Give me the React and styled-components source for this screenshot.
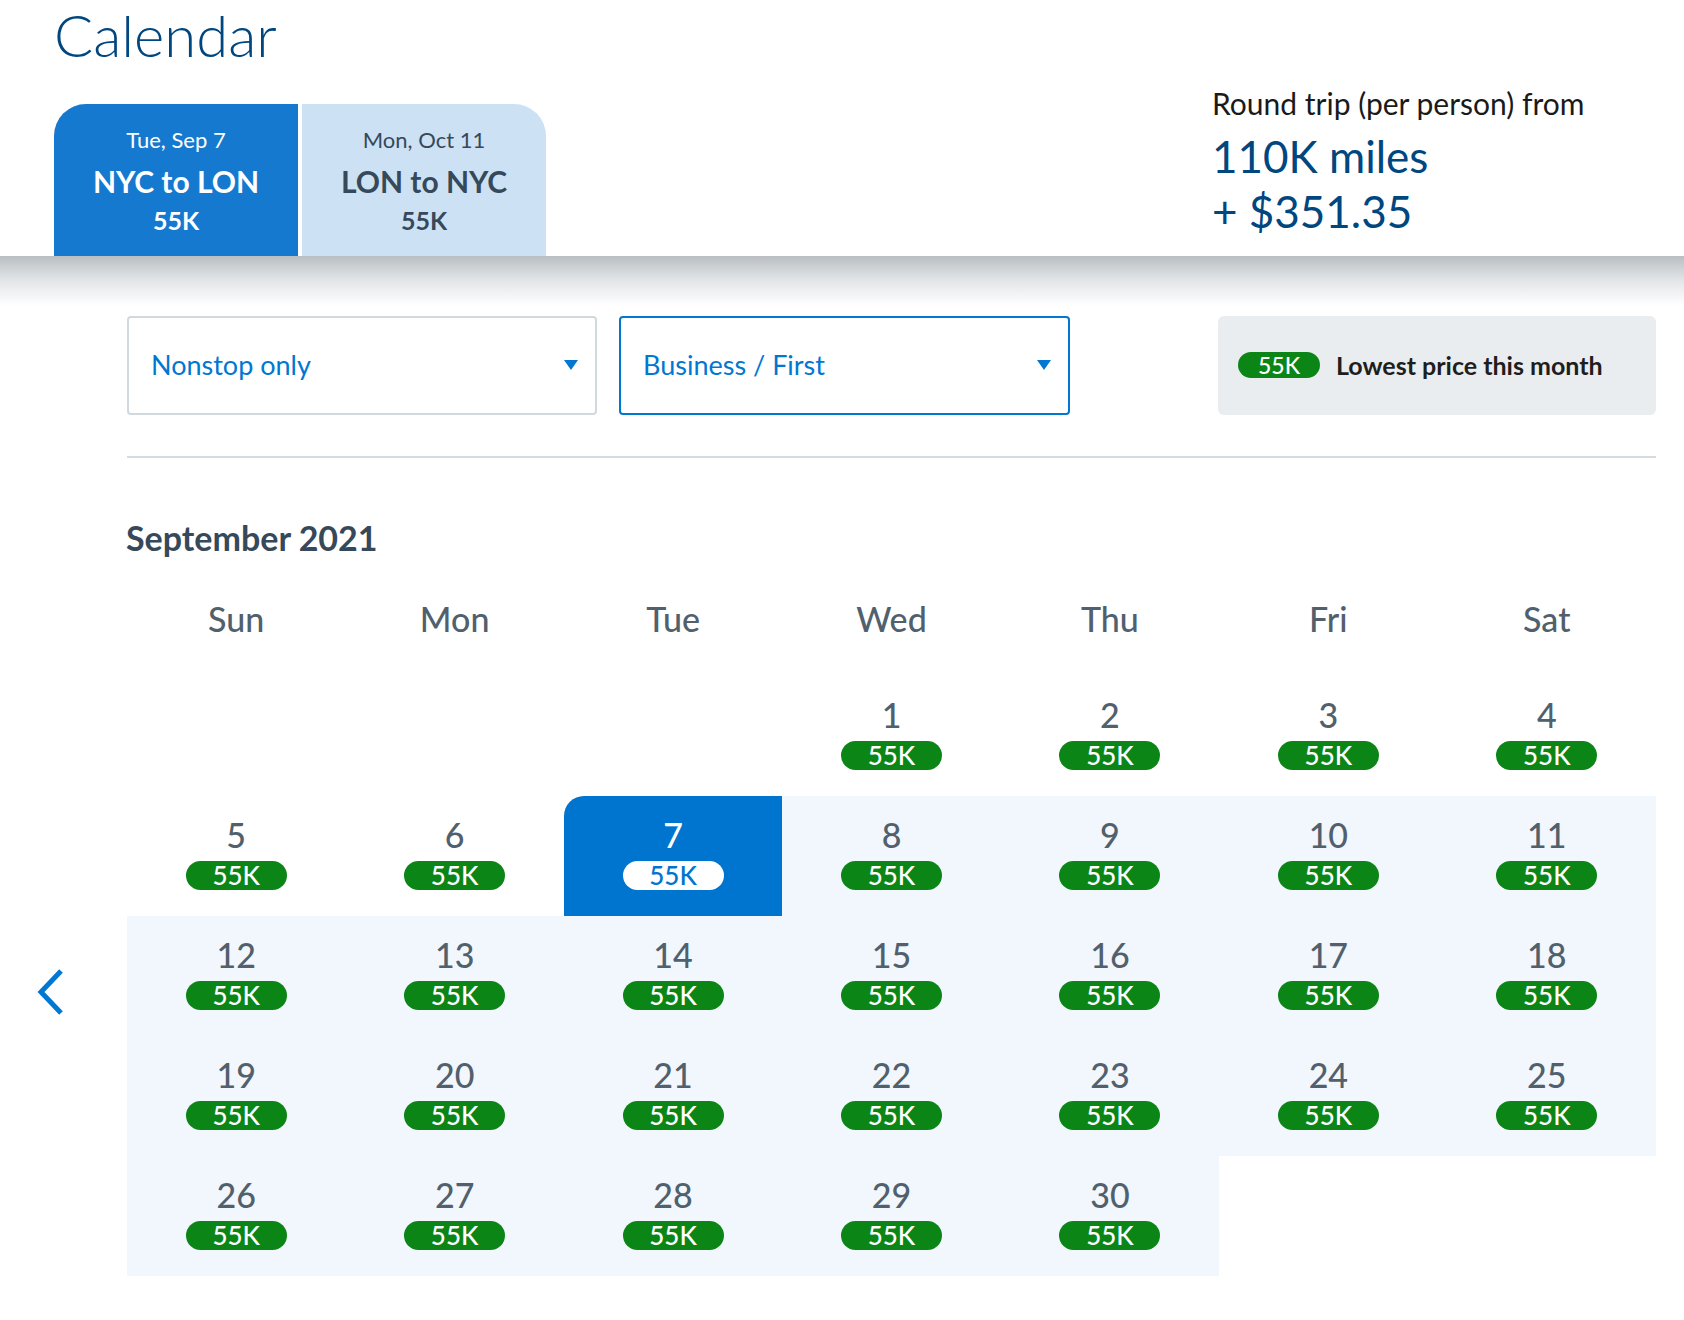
import React from 'react'
import styled, { createGlobalStyle } from 'styled-components'

const GlobalStyle = createGlobalStyle`
  body {
    margin: 0;
    background: #fff;
    font-family: Lato, "Open Sans", "Liberation Sans", sans-serif;
  }
`

const Page = styled.div`
  width: 1684px;
  min-height: 1320px;
  background: #fff;
`

const Header = styled.header`
  display: flex;
  justify-content: space-between;
  height: 256px;
  padding: 0 72px 0 54px;
  box-sizing: border-box;
`

const HeaderLeft = styled.div`
  display: flex;
  flex-direction: column;
`

const Title = styled.h1`
  margin: 6px 0 0 0;
  font-size: 58px;
  line-height: 58px;
  font-weight: 300;
  color: #00467f;
`

const Tabs = styled.div`
  display: flex;
  gap: 4px;
  margin-top: 40px;
`

const Tab = styled.div`
  width: 244px;
  height: 152px;
  box-sizing: border-box;
  padding-top: 23px;
  display: flex;
  flex-direction: column;
  align-items: center;
  background: ${p => (p.$active ? '#1479cf' : '#cde1f4')};
  color: ${p => (p.$active ? '#fff' : '#36495a')};
  border-radius: ${p => (p.$active ? '32px 0 0 0' : '0 32px 0 0')};
`

const TabDate = styled.div`
  font-size: 22px;
  line-height: 26px;
  font-weight: 400;
`

const TabRoute = styled.div`
  margin-top: 10px;
  font-size: 30px;
  line-height: 36px;
  font-weight: 700;
`

const TabMiles = styled.div`
  margin-top: 6px;
  font-size: 25px;
  line-height: 30px;
  font-weight: 700;
`

const PriceBlock = styled.div`
  width: 400px;
  padding-top: 86px;
`

const PriceLabel = styled.div`
  font-size: 30px;
  line-height: 34px;
  color: #1a1a1a;
`

const PriceAmount = styled.div`
  margin-top: ${p => p.$gap || 0}px;
  font-size: 44px;
  line-height: 52px;
  color: #00467f;
`

const Main = styled.main`
  padding: 60px 28px 42px 127px;
  background: linear-gradient(#b9bec2 0px, #e2e5e7 24px, #fff 50px) no-repeat;
`

const FilterRow = styled.div`
  display: flex;
  gap: 22px;
  height: 99px;
`

const Select = styled.div`
  width: ${p => p.$width}px;
  box-sizing: border-box;
  display: flex;
  align-items: center;
  justify-content: space-between;
  padding: 0 16px 2px 22px;
  border: 2px solid ${p => (p.$focused ? '#0078d2' : '#d0d9de')};
  border-radius: 4px;
  font-size: 27px;
  color: #0078d2;
`

const Legend = styled.div`
  margin-left: auto;
  width: 438px;
  display: flex;
  align-items: center;
  gap: 16px;
  padding: 0 0 2px 20px;
  box-sizing: border-box;
  background: #e9edef;
  border-radius: 6px;
  font-size: 25px;
  font-weight: 700;
  color: #1e1e1e;
`

const Pill = styled.span`
  display: inline-block;
  width: ${p => p.$width || 101}px;
  height: ${p => p.$height || 29}px;
  line-height: ${p => p.$height || 29}px;
  border-radius: 15px;
  text-align: center;
  font-size: ${p => p.$size || 26}px;
  font-weight: 500;
  background: ${p => (p.$inverse ? '#fff' : '#0b8516')};
  color: ${p => (p.$inverse ? '#0075cf' : '#fff')};
`

const Divider = styled.hr`
  margin: 41px 0 0 0;
  border: none;
  height: 2px;
  background: #d5dbdf;
`

const MonthTitle = styled.h2`
  margin: 59px 0 0 -1px;
  font-size: 34px;
  line-height: 42px;
  font-weight: 700;
  color: #36495a;
`

const CalendarArea = styled.div`
  position: relative;
`

const WeekHeader = styled.div`
  display: grid;
  grid-template-columns: repeat(7, 1fr);
  margin: 40px 0 37px 0;
  font-size: 34px;
  line-height: 40px;
  font-weight: 500;
  color: #51606d;
  text-align: center;
`

const Grid = styled.div`
  position: relative;
  display: grid;
  grid-template-columns: repeat(7, 1fr);
  grid-auto-rows: 120px;
`

const Cell = styled.div`
  display: flex;
  flex-direction: column;
  align-items: center;
  padding-top: 22px;
  box-sizing: border-box;
  background: ${p =>
    p.$tone === 'selected' ? '#0075cf' : p.$tone === 'range' ? '#f1f7fc' : 'transparent'};
  border-radius: ${p => (p.$tone === 'selected' ? '20px 0 0 0' : '0')};
`

const DayNum = styled.div`
  font-size: 34px;
  line-height: 34px;
  font-weight: 500;
  margin-bottom: 9px;
  color: ${p => (p.$light ? '#fff' : '#51606d')};
`

const PrevButton = styled.button`
  position: absolute;
  left: -92px;
  top: 292px;
  padding: 0;
  border: none;
  background: none;
  cursor: pointer;
`

const Caret = () => (
  <svg width="16" height="12" viewBox="0 0 16 12">
    <polygon points="1,1 15,1 8,11" fill="#0078d2" />
  </svg>
)

const weekdays = ['Sun', 'Mon', 'Tue', 'Wed', 'Thu', 'Fri', 'Sat']

const cells = [
  ...Array(3).fill(null),
  ...Array.from({ length: 30 }, (_, i) => i + 1),
  ...Array(2).fill(null),
]

const toneFor = day => {
  if (day === null || day < 7) return 'plain'
  if (day === 7) return 'selected'
  return 'range'
}

export default function App() {
  return (
    <Page>
      <GlobalStyle />
      <Header>
        <HeaderLeft>
          <Title>Calendar</Title>
          <Tabs>
            <Tab $active>
              <TabDate>Tue, Sep 7</TabDate>
              <TabRoute>NYC to LON</TabRoute>
              <TabMiles>55K</TabMiles>
            </Tab>
            <Tab>
              <TabDate>Mon, Oct 11</TabDate>
              <TabRoute>LON to NYC</TabRoute>
              <TabMiles>55K</TabMiles>
            </Tab>
          </Tabs>
        </HeaderLeft>
        <PriceBlock>
          <PriceLabel>Round trip (per person) from</PriceLabel>
          <PriceAmount $gap={10}>110K miles</PriceAmount>
          <PriceAmount $gap={3}>+ $351.35</PriceAmount>
        </PriceBlock>
      </Header>

      <Main>
        <FilterRow>
          <Select $width={470}>
            <span>Nonstop only</span>
            <Caret />
          </Select>
          <Select $width={451} $focused>
            <span>Business / First</span>
            <Caret />
          </Select>
          <Legend>
            <Pill $width={82} $height={26} $size={23}>55K</Pill>
            <span>Lowest price this month</span>
          </Legend>
        </FilterRow>

        <Divider />
        <MonthTitle>September 2021</MonthTitle>

        <CalendarArea>
          <WeekHeader>
            {weekdays.map(d => (
              <div key={d}>{d}</div>
            ))}
          </WeekHeader>
          <Grid>
            <PrevButton aria-label="Previous month">
              <svg width="30" height="48" viewBox="0 0 30 48">
                <polyline points="26,3 6,24 26,45" fill="none" stroke="#0078d2" strokeWidth="5" />
              </svg>
            </PrevButton>
            {cells.map((day, i) => {
              const tone = toneFor(day)
              return (
                <Cell key={i} $tone={tone}>
                  {day !== null && (
                    <>
                      <DayNum $light={tone === 'selected'}>{day}</DayNum>
                      <Pill $inverse={tone === 'selected'}>55K</Pill>
                    </>
                  )}
                </Cell>
              )
            })}
          </Grid>
        </CalendarArea>
      </Main>
    </Page>
  )
}
